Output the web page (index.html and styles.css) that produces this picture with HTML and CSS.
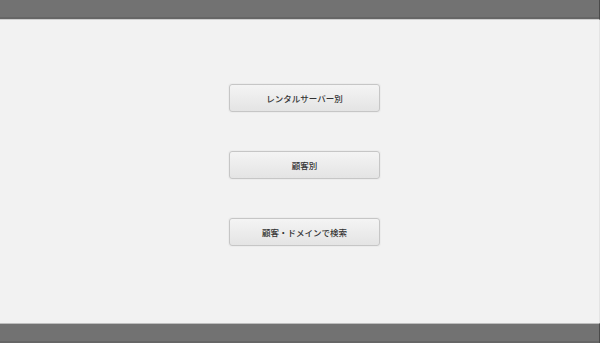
FILE: index.html
```html
<!DOCTYPE html>
<html lang="ja">

<head>
  <meta charset="UTF-8">
  <meta name="viewport" content="width=device-width, initial-scale=1.0">
  <title>Menu</title>
  <link rel="stylesheet" href="styles.css">
</head>

<body>
  <header class="bar bar-top"></header>
  <main class="menu">
    <button class="menu-btn" type="button">レンタルサーバー別</button>
    <button class="menu-btn" type="button">顧客別</button>
    <button class="menu-btn" type="button">顧客・ドメインで検索</button>
  </main>
  <footer class="bar bar-bottom"></footer>
</body>

</html>
```
FILE: styles.css
```css
* {
  padding: 0;
  margin: 0;
  box-sizing: border-box;
}

html,
body {
  height: 100%;
}

body {
  display: flex;
  flex-direction: column;
  background-color: #f2f2f2;
  font-family: "Noto Sans CJK JP", "Noto Sans", sans-serif;
}

.bar {
  height: 20px;
  flex: none;
  background-color: #727272;
  border-right: 1px solid #4a4a4a;
}

.bar-top {
  border-bottom: 1px solid #cfcfcf;
  box-shadow: inset 0 -2px 0 #666;
}

.bar-bottom {
  border-top: 1px solid #bdbdbd;
  box-shadow: inset 0 -2px 0 #666;
}

.menu {
  flex: 1;
  display: flex;
  flex-direction: column;
  align-items: center;
  gap: 39px;
  padding-top: 64px;
  padding-left: 10px;
  border-right: 1px solid #e4e4e4;
}

.menu-btn {
  width: 151px;
  height: 28px;
  font-family: inherit;
  font-size: 8.5px;
  font-weight: 500;
  color: #333;
  background: linear-gradient(#f4f4f4, #e4e4e4);
  border: 1px solid #c6c6c6;
  border-radius: 3px;
  box-shadow: 0 0 0 1px #ececec;
}
```
